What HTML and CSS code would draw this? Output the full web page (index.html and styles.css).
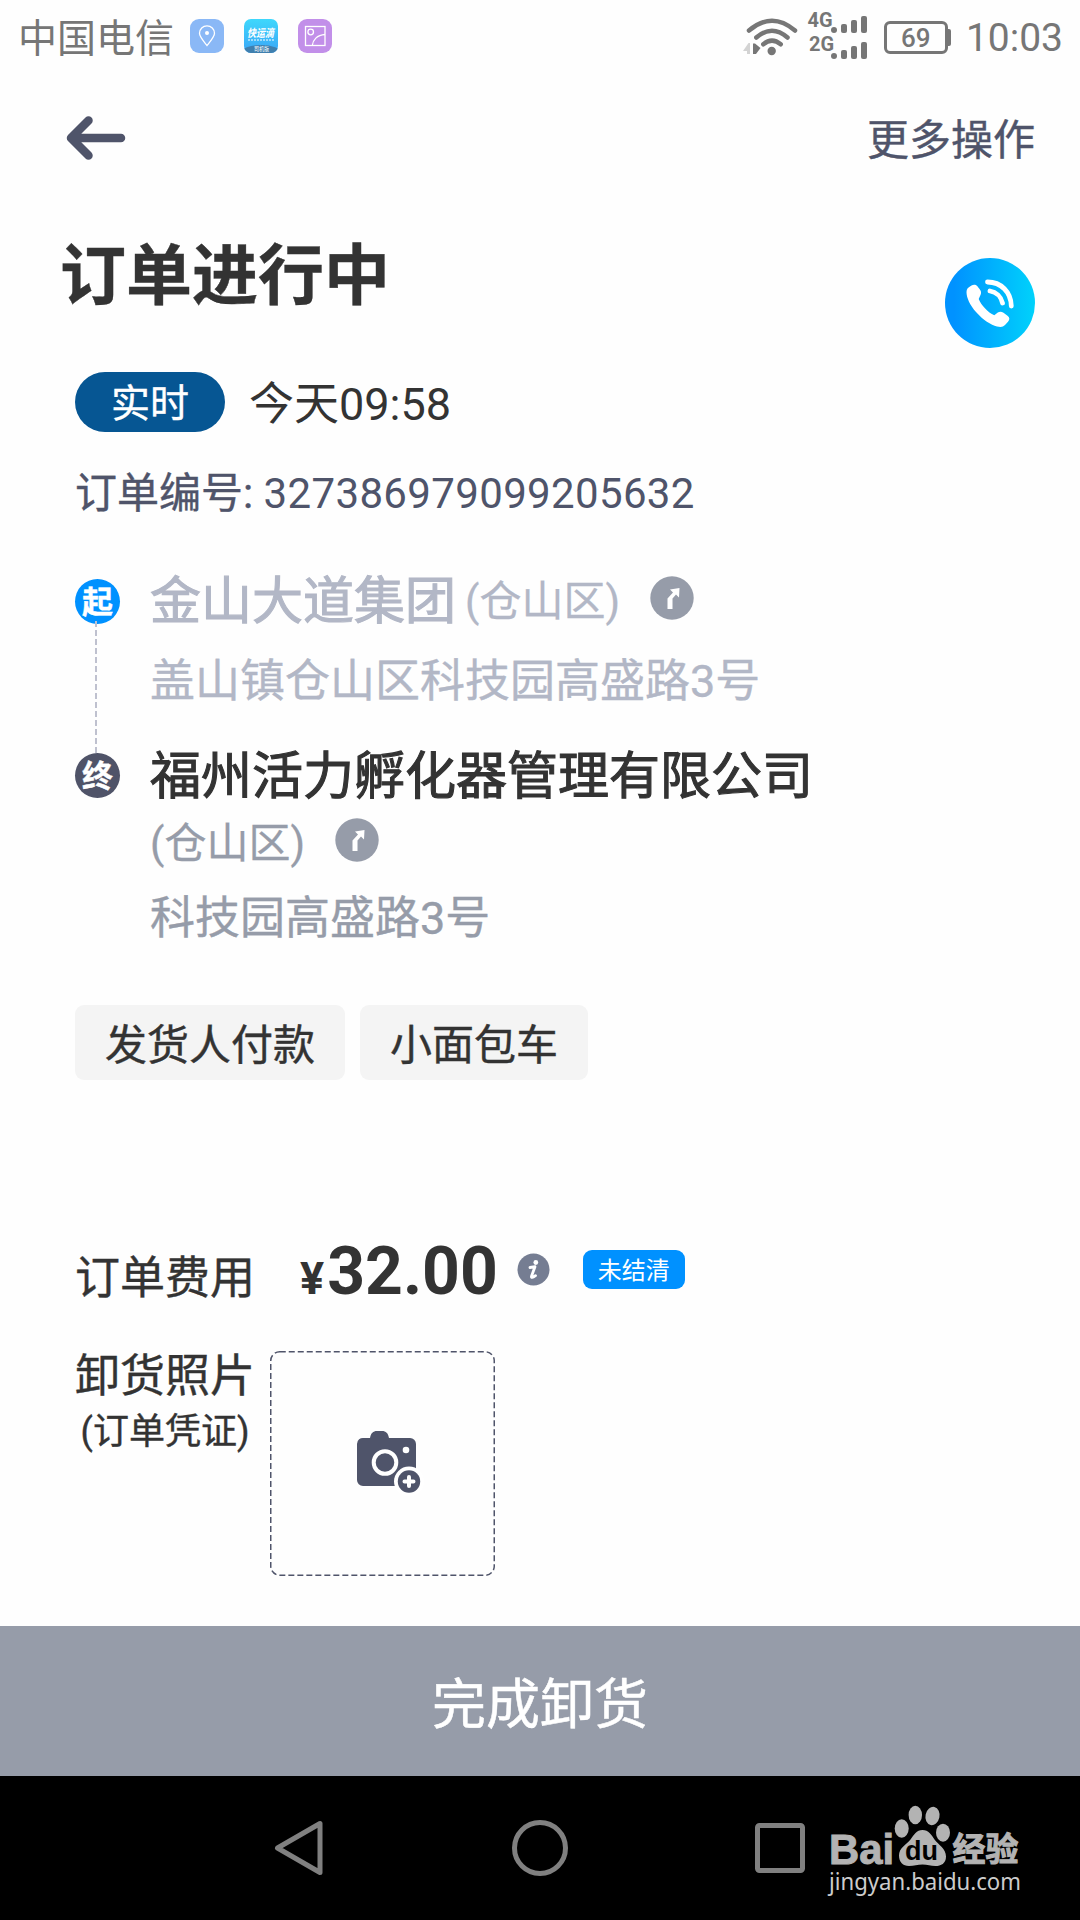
FILE: index.html
```html
<!DOCTYPE html>
<html lang="zh-CN">
<head>
  <meta charset="UTF-8" />
  <meta name="viewport" content="width=device-width, initial-scale=1.0" />
  <title>订单进行中</title>
  <link rel="stylesheet" href="styles.css">
</head>
<body>
  <div class="screen">
    <div class="status-bar">
      <span class="carrier">中国电信</span>
      <div class="status-apps">
        <svg width="34" height="34" viewBox="0 0 34 34">
          <rect width="34" height="34" rx="9" fill="#8ab8f6"/>
          <path d="M17 26.500C12.500 21 9.500 17.700 9.500 14.300a7.500 7.500 0 0 1 15 0C24.500 17.700 21.500 21 17 26.500z" fill="none" stroke="#fff" stroke-width="1.300"/>
          <circle cx="17" cy="14" r="2" fill="#fff"/>
        </svg>
        <svg width="34" height="34" viewBox="0 0 34 34">
          <defs>
            <linearGradient id="appBg" x1="0" y1="0" x2="0" y2="1">
              <stop offset="0" stop-color="#3fd8fc"/>
              <stop offset="1" stop-color="#3aa5f7"/>
            </linearGradient>
            <clipPath id="appClip"><rect width="34" height="34" rx="7"/></clipPath>
          </defs>
          <g clip-path="url(#appClip)">
            <rect width="34" height="34" fill="url(#appBg)"/>
            <ellipse cx="17" cy="34" rx="20" ry="8" fill="#3f7fae"/>
          </g>
          <path d="M4 21h27" stroke="#fff" stroke-width="1" stroke-dasharray="2 1"/>
          <text class="app-name" x="3" y="17.500" textLength="27" lengthAdjust="spacingAndGlyphs">快运滴</text>
          <text class="app-sub" x="10" y="32" textLength="15" lengthAdjust="spacingAndGlyphs">司机版</text>
        </svg>
        <svg width="34" height="34" viewBox="0 0 34 34">
          <rect width="34" height="34" rx="9" fill="#c28fe9"/>
          <g fill="none" stroke="#fff" stroke-width="1.300">
            <rect x="7.500" y="7.500" width="19.500" height="19"/>
            <circle cx="12.700" cy="13" r="2.800"/>
            <path d="M14.300 26.500C14.800 21 19 16 27 15.500"/>
          </g>
        </svg>
      </div>
      <div class="status-right">
        <svg width="58" height="42" viewBox="0 0 58 42">
          <g fill="none" stroke="#767676" stroke-width="4.500" stroke-linecap="round">
            <path d="M8 15.500Q31 -4 54 15.500"/>
            <path d="M15.300 22.500Q31 9 46.500 22.500"/>
            <path d="M22.300 29.300Q31 22 39.700 29.300"/>
          </g>
          <circle cx="30.700" cy="36" r="4.200" fill="#767676"/>
          <path d="M2 36l5.500-8h1.500v11H6v-3z" fill="#d3d3d3"/>
          <path d="M12 28.500h2l5.500 4.500-4.500 6h-3z" fill="#767676"/>
        </svg>
        <svg width="62" height="50" viewBox="0 0 62 50">
          <text class="net-type" x="0.500" y="16">4G</text>
          <text class="net-type" x="2" y="39.500">2G</text>
          <g fill="#767676">
            <rect x="24" y="16" width="6" height="6" rx="3"/>
            <rect x="34" y="13" width="6" height="9" rx="2"/>
            <rect x="44" y="9" width="6" height="13" rx="2"/>
            <rect x="54" y="5" width="6" height="17" rx="2"/>
            <rect x="24" y="42" width="6" height="6" rx="3"/>
            <rect x="34" y="39" width="6" height="9" rx="2"/>
            <rect x="44" y="35" width="6" height="13" rx="2"/>
            <rect x="54" y="31" width="6" height="17" rx="2"/>
          </g>
        </svg>
        <div class="battery">69</div>
        <span class="clock">10:03</span>
      </div>
    </div>

    <header class="header">
      <svg width="60" height="44" viewBox="0 0 60 44">
        <path d="M22.500 4.500L5 22l17.500 17.500M7 22h48" fill="none" stroke="#4f546a" stroke-width="8.500" stroke-linecap="round" stroke-linejoin="round"/>
      </svg>
      <a class="more" href="#">更多操作</a>
    </header>

    <main class="content">
      <div class="title-row">
        <h1>订单进行中</h1>
        <svg class="call" width="90" height="90" viewBox="0 0 90 90">
          <defs>
            <linearGradient id="callBg">
              <stop offset="0.100" stop-color="#0092ff"/>
              <stop offset="1" stop-color="#00d2fb"/>
            </linearGradient>
          </defs>
          <circle cx="45" cy="45" r="45" fill="url(#callBg)"/>
          <path d="M21.500 34C21.500 40 25 47 31 54c7 8 15 13 21 14.500 4 1 6 .5 8-1.500l3-3.200c2-2.200 1.700-4.400-.5-6l-4-3c-2-1.500-4-1.500-5.700-.2l-3.500 2.700C43 54.500 36 47 33.700 41l2-4.500c.8-2 .3-3.500-1-5.200l-2.500-3.200c-1.500-1.800-4-1.800-5.700-.5C23 29.500 21.500 31 21.500 34z" fill="#fff"/>
          <path d="M42.500 24C56 24 66 34 66.300 48M45 33c6 1 11 5.500 12.500 12" fill="none" stroke="#fff" stroke-width="4.800" stroke-linecap="round"/>
        </svg>
      </div>

      <div class="time-row">
        <span class="pill">实时</span>
        <span class="time">今天09:58</span>
      </div>
      <p class="order-no">订单编号: <span class="number">327386979099205632</span></p>

      <div class="stop stop-start">
        <div class="marker">
          <span class="dot">起</span>
          <span class="line"></span>
        </div>
        <div class="place">
          <div class="place-name">
            金山大道集团<span class="district">(仓山区)</span>
            <svg class="go" width="44" height="44" viewBox="0 0 44 44">
              <circle cx="22" cy="22" r="21.700" fill="#969ca9"/>
              <path d="M17.500 33V22.500l5.500-6L20 13.500l9.500-1.500-.5 9.500-3-3-3.500 4V33z" fill="#fff"/>
            </svg>
          </div>
          <div class="address">盖山镇仓山区科技园高盛路3号</div>
        </div>
      </div>
      <div class="stop stop-end">
        <div class="marker">
          <span class="dot">终</span>
        </div>
        <div class="place">
          <div class="place-name">福州活力孵化器管理有限公司</div>
          <div class="place-area">
            <span class="district">(仓山区)</span>
            <svg class="go" width="44" height="44" viewBox="0 0 44 44">
              <circle cx="22" cy="22" r="21.700" fill="#969ca9"/>
              <path d="M17.500 33V22.500l5.500-6L20 13.500l9.500-1.500-.5 9.500-3-3-3.500 4V33z" fill="#fff"/>
            </svg>
          </div>
          <div class="address">科技园高盛路3号</div>
        </div>
      </div>

      <div class="tags">
        <span class="tag">发货人付款</span>
        <span class="tag">小面包车</span>
      </div>

      <div class="fee-row">
        <span class="label">订单费用</span>
        <span class="price"><small>¥</small>32.00</span>
        <svg class="info" width="33" height="33" viewBox="0 0 33 33">
          <circle cx="16.500" cy="16.500" r="16" fill="#757d92"/>
          <circle cx="18.800" cy="9.500" r="2.400" fill="#fff"/>
          <path d="M13 14.500l5-.8-3.500 9.500c-.3 1.800 1 1.700 4-.5" fill="none" stroke="#fff" stroke-width="2.800" stroke-linecap="round" stroke-linejoin="round"/>
        </svg>
        <span class="badge">未结清</span>
      </div>

      <div class="photo-row">
        <div class="photo-label">
          <div class="label">卸货照片</div>
          <div class="hint">(订单凭证)</div>
        </div>
        <svg class="upload" width="226" height="226" viewBox="0 0 226 226">
          <rect x="0.750" y="0.750" width="223.500" height="223.500" rx="9" fill="none" stroke="#4f546a" stroke-width="1.500" stroke-dasharray="6 3"/>
          <path d="M94 87h6c1-5 3-7 7-7h5c4 0 6 2 7 7h21a6 6 0 0 1 6 6v42H93a6 6 0 0 1-6-6V93a6 6 0 0 1 7-6z" fill="#4f546a"/>
          <circle cx="115" cy="111.500" r="11.300" fill="#4f546a" stroke="#fff" stroke-width="4"/>
          <circle cx="136" cy="99" r="3.300" fill="#fff"/>
          <circle cx="139" cy="130.500" r="15" fill="#fff"/>
          <circle cx="139" cy="130.500" r="11.200" fill="#4f546a"/>
          <path d="M134.500 130.500h9M139 126v9" stroke="#fff" stroke-width="4" stroke-linecap="round"/>
        </svg>
      </div>
    </main>

    <button class="finish">完成卸货</button>

    <nav class="nav-bar">
      <svg width="52" height="58" viewBox="0 0 52 58">
        <path d="M47 4.500v49L4.500 29z" fill="none" stroke="#808080" stroke-width="5" stroke-linejoin="round"/>
      </svg>
      <svg width="56" height="56" viewBox="0 0 56 56">
        <circle cx="28" cy="28" r="25.500" fill="none" stroke="#808080" stroke-width="5"/>
      </svg>
      <svg width="50" height="50" viewBox="0 0 50 50">
        <rect x="2.500" y="2.500" width="45" height="45" rx="2" fill="none" stroke="#808080" stroke-width="5"/>
      </svg>
    </nav>

    <svg class="watermark" width="200" height="100" viewBox="0 0 200 100">
      <g fill="#b3b3b3">
        <text class="wm-bai" x="5" y="64" textLength="65" lengthAdjust="spacingAndGlyphs">Bai</text>
        <ellipse cx="77.700" cy="28.500" rx="7" ry="9.300"/>
        <ellipse cx="91.300" cy="15" rx="6.700" ry="9.300"/>
        <ellipse cx="108.500" cy="16" rx="7" ry="9.200" transform="rotate(12 108.500 16)"/>
        <ellipse cx="119" cy="32.700" rx="7" ry="9"/>
        <path d="M98.500 30c6 0 9 5 12 9.500 4 5.500 11.500 9 11.500 17 0 7-5 9.500-10.500 9.500-5 0-8-1.500-13-1.500S90 66 85 66c-6 0-10-4-10-10.500C75 48 82 45 86.500 39.500 90 35 92.500 30 98.500 30z"/>
        <text class="wm-du" x="81" y="60" textLength="33" lengthAdjust="spacingAndGlyphs">du</text>
        <text class="wm-cn" x="128.500" y="61">经验</text>
      </g>
      <text class="wm-url" x="5" y="90" textLength="192" lengthAdjust="spacingAndGlyphs">jingyan.baidu.com</text>
    </svg>
  </div>
</body>
</html>
```
FILE: styles.css
```css
* {
  box-sizing: border-box;
}

body {
  margin: 0;
  background: #fefefe;
  color: #333333;
  font-family: Roboto, 'Noto Sans CJK SC', sans-serif;
}

h1, p {
  margin: 0;
}

svg {
  display: block;
  flex-shrink: 0;
  overflow: visible;
}

.screen {
  position: relative;
  display: flex;
  flex-direction: column;
  width: 1080px;
  height: 1920px;
  overflow: hidden;
}

/* Status bar */
.status-bar {
  display: flex;
  align-items: center;
  height: 76px;
  padding: 0 17px 4px 18px;
  color: #767676;
}

.carrier {
  font-size: 39px;
  line-height: 60px;
  padding-top: 5px;
}

.status-apps {
  display: flex;
  gap: 20px;
  margin-left: 16px;
}

.status-right {
  display: flex;
  align-items: center;
  margin-left: auto;
}

.app-name {
  font-size: 11px;
  font-weight: bold;
  font-style: italic;
  fill: #ffffff;
}

.app-sub {
  font-size: 6px;
  fill: #ffffff;
}

.net-type {
  font-size: 20px;
  font-weight: bold;
  fill: #767676;
}

.status-right svg + svg {
  margin-left: 8px;
}

.battery {
  position: relative;
  width: 64px;
  height: 33px;
  margin: 3px 0 0 15px;
  border: 3px solid #767676;
  border-radius: 6px;
  font-size: 26px;
  font-weight: 500;
  line-height: 28px;
  text-align: center;
}

.battery::after {
  content: '';
  position: absolute;
  top: 5px;
  right: -6px;
  width: 4px;
  height: 17px;
  border-radius: 0 2px 2px 0;
  background: #767676;
}

.clock {
  margin-left: 18px;
  padding-top: 4px;
  font-size: 39px;
  line-height: 60px;
}

/* Header */
.header {
  display: flex;
  align-items: center;
  justify-content: space-between;
  height: 124px;
  padding: 0 45px 0 66px;
}

.more {
  padding-top: 6px;
  color: #4f546a;
  font-size: 42px;
  line-height: 60px;
  text-decoration: none;
  -webkit-text-stroke: 0.4px;
}

/* Order */
.content {
  flex: 1;
  padding: 0 45px 0 75px;
  -webkit-text-stroke: 0.4px;
}

.title-row {
  display: flex;
  justify-content: space-between;
  height: 154px;
  margin-left: -15px;
}

h1 {
  font-size: 66px;
  font-weight: bold;
  line-height: 154px;
}

.call {
  margin-top: 58px;
}

.time-row {
  display: flex;
  height: 60px;
  margin-top: 18px;
}

.pill {
  width: 150px;
  border-radius: 30px;
  background: #065693;
  color: #ffffff;
  font-size: 39px;
  line-height: 65px;
  text-align: center;
}

.time {
  margin-left: 24px;
  font-size: 45px;
  line-height: 66px;
  -webkit-text-stroke: 0;
}

.order-no {
  margin-top: 32px;
  color: #4f546a;
  font-size: 42px;
  line-height: 60px;
}

.number {
  letter-spacing: 0.35px;
  -webkit-text-stroke: 0;
}

/* Route */
.stop {
  display: flex;
  gap: 30px;
}

.stop-start {
  height: 174px;
  margin-top: 48px;
  color: #b2b7c6;
}

.marker {
  display: flex;
  flex-direction: column;
  width: 45px;
  padding-top: 7px;
}

.dot {
  height: 45px;
  border-radius: 50%;
  background: #4f5368;
  color: #ffffff;
  font-size: 31px;
  font-weight: bold;
  line-height: 47px;
  text-align: center;
}

.stop-start .dot {
  background: #0091ff;
}

.line {
  flex: 1;
  width: 2px;
  margin: -3px 0 -7px 20px;
  background: repeating-linear-gradient(#bfc1cf 0 6px, transparent 6px 9px);
}

.place-name {
  display: flex;
  align-items: center;
  font-size: 51px;
  line-height: 60px;
  -webkit-text-stroke: 1.1px;
}

.stop-end .place-name {
  padding-top: 1px;
  margin-bottom: -1px;
}

.district {
  font-size: 42px;
  -webkit-text-stroke: 0.3px;
}

.place-name .district {
  margin-left: 9px;
}

.go {
  margin: -9px 0 0 30px;
}

.place-area .go {
  margin-top: -8px;
}

.address {
  margin-top: 20px;
  font-size: 45px;
  line-height: 60px;
}

.place-area {
  display: flex;
  align-items: center;
  margin-top: 8px;
  color: #969ca9;
  line-height: 60px;
}

.stop-end .address {
  margin: 15px 0 -1px;
  color: #969ca9;
}

.tags {
  display: flex;
  gap: 15px;
  margin-top: 57px;
}

.tag {
  padding: 0 30px;
  border-radius: 9px;
  background: #f4f4f4;
  font-size: 42px;
  line-height: 82px;
  height: 75px;
}

/* Fee and photo */
.fee-row {
  display: flex;
  align-items: baseline;
  height: 67px;
  margin-top: 162px;
  line-height: 60px;
}

.label {
  padding-top: 1px;
  font-size: 45px;
  line-height: 60px;
}

.price {
  margin-left: 45px;
  font-size: 66px;
  font-weight: bold;
  -webkit-text-stroke: 0;
}

.price small {
  margin-right: 3px;
  font-size: 45px;
}

.info {
  align-self: flex-start;
  margin: 11px 0 0 19px;
}

.badge {
  align-self: flex-start;
  width: 102px;
  height: 39px;
  margin: 8px 0 0 33px;
  border-radius: 9px;
  background: #0091ff;
  color: #ffffff;
  font-size: 24px;
  line-height: 43px;
  text-align: center;
  -webkit-text-stroke: 0;
}

.photo-row {
  display: flex;
  margin-top: 37px;
}

.hint {
  font-size: 36px;
  line-height: 51px;
  text-align: center;
}

.upload {
  margin: 5px 0 0 15px;
}

.finish {
  height: 150px;
  padding: 0 0 2px;
  border: none;
  background: #969ca9;
  color: #ffffff;
  font-family: inherit;
  font-size: 54px;
  -webkit-text-stroke: 0.5px;
}

/* System navigation */
.nav-bar {
  display: flex;
  align-items: center;
  justify-content: space-between;
  height: 144px;
  padding: 0 275px 0 273px;
  background: #000000;
}

.watermark {
  position: absolute;
  left: 824px;
  top: 1800px;
}

.wm-bai {
  font-family: 'Liberation Sans', sans-serif;
  font-size: 43px;
  font-weight: bold;
  stroke: #b3b3b3;
}

.wm-du {
  font-family: 'Liberation Sans', sans-serif;
  font-size: 28px;
  font-weight: bold;
  fill: #000000;
}

.wm-cn {
  font-size: 33px;
  font-weight: bold;
  stroke: #b3b3b3;
}

.wm-url {
  font-family: 'Noto Sans', sans-serif;
  font-size: 23px;
  fill: #cccccc;
}
```
